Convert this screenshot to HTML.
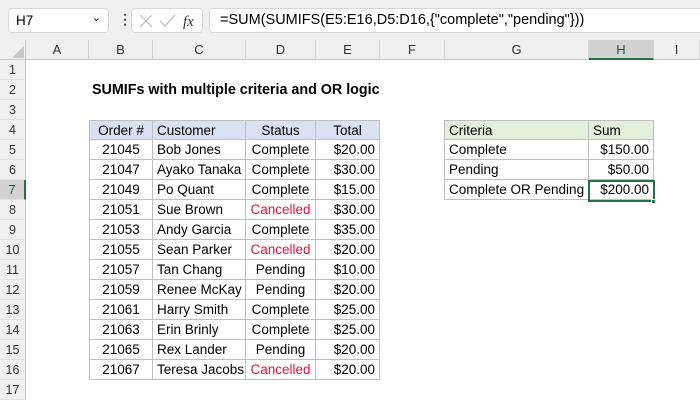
<!DOCTYPE html><html><head><style>
*{margin:0;padding:0;box-sizing:border-box}
body{width:700px;height:400px;overflow:hidden;background:#fff;font-family:"Liberation Sans",Calibri,sans-serif;font-size:13.5px;color:#000;position:relative}
.a{position:absolute}
.top{left:0;top:0;width:700px;height:60px;background:#f0f0f0}
.box{background:#fff;border:1px solid #d6d6d6;border-radius:4px}
.ch{top:40px;height:20px;border-right:1px solid #d4d4d4;border-bottom:1px solid #c8c8c8;text-align:center;line-height:20px;color:#333;font-size:13px}
.rh{left:0;width:26px;height:20px;background:#f0f0f0;border-right:1px solid #c8c8c8;border-bottom:1px solid #e0e0e0;text-align:center;line-height:20px;color:#333;font-size:12.5px}
.c{height:20px;line-height:20px;border-right:1px solid #bfbfbf;border-bottom:1px solid #bfbfbf;padding:0 4px;white-space:nowrap}
.r{text-align:right}.m{text-align:center}.red{color:#e8103a}
</style></head><body>
<div class="a top"></div>
<div class="a box" style="left:8px;top:8px;width:101px;height:25px;padding:4px 7px;font-size:13.5px">H7<span style="position:absolute;right:7px;top:2px;font-size:11px">&#8964;</span></div>
<div class="a" style="left:118px;top:11px;color:#555;font-weight:bold;font-size:14px">&#8942;</div>
<div class="a box" style="left:131px;top:8px;width:72px;height:25px"></div>
<svg class="a" style="left:138px;top:13px" width="60" height="16"><path d="M2 2L14 14M14 2L2 14" stroke="#bbb" stroke-width="1.2" fill="none"/><path d="M22 8l5 5 10-11" stroke="#bbb" stroke-width="1.2" fill="none"/><text x="45" y="13" font-family="Liberation Serif" font-style="italic" font-size="15" fill="#333">fx</text></svg>
<div class="a box" style="left:209px;top:8px;width:500px;height:25px;padding:3px 10px;font-size:14.5px">=SUM(SUMIFS(E5:E16,D5:D16,{"complete","pending"}))</div>
<div class="a" style="left:0;top:40px;width:26px;height:20px;border-right:1px solid #c8c8c8;border-bottom:1px solid #c8c8c8"></div>
<svg class="a" style="left:12px;top:46px" width="12" height="12"><path d="M12 0V12H0Z" fill="#c8c8c8"/></svg>
<div class="a ch" style="left:26px;width:63px">A</div>
<div class="a ch" style="left:89px;width:64px">B</div>
<div class="a ch" style="left:153px;width:93px">C</div>
<div class="a ch" style="left:246px;width:70px">D</div>
<div class="a ch" style="left:316px;width:64px">E</div>
<div class="a ch" style="left:380px;width:65px">F</div>
<div class="a ch" style="left:445px;width:144px">G</div>
<div class="a ch" style="left:589px;width:65px;background:#d2d2d2;border-bottom:2px solid #217346;color:#1e5c38">H</div>
<div class="a ch" style="left:654px;width:46px">I</div>
<div class="a rh" style="top:60px">1</div><div class="a rh" style="top:80px">2</div><div class="a rh" style="top:100px">3</div><div class="a rh" style="top:120px">4</div><div class="a rh" style="top:140px">5</div><div class="a rh" style="top:160px">6</div><div class="a rh" style="top:180px;background:#d2d2d2;border-right:2px solid #217346;color:#1e5c38">7</div><div class="a rh" style="top:200px">8</div><div class="a rh" style="top:220px">9</div><div class="a rh" style="top:240px">10</div><div class="a rh" style="top:260px">11</div><div class="a rh" style="top:280px">12</div><div class="a rh" style="top:300px">13</div><div class="a rh" style="top:320px">14</div><div class="a rh" style="top:340px">15</div><div class="a rh" style="top:360px">16</div><div class="a rh" style="top:380px">17</div>
<div class="a" style="left:92px;top:82px;font-weight:bold;font-size:14.3px">SUMIFs with multiple criteria and OR logic</div>
<div id="T" class="a" style="left:89px;top:120px"></div>
<div id="G" class="a" style="left:444px;top:120px"></div>
<div class="a" style="left:588px;top:180px;width:67px;height:22px;border:2px solid #217346"></div>
<div class="a" style="left:651px;top:199px;width:5px;height:5px;background:#217346;border:1px solid #fff"></div>
<script>
var d=[["21045","Bob Jones","Complete","$20.00"],["21047","Ayako Tanaka","Complete","$30.00"],["21049","Po Quant","Complete","$15.00"],["21051","Sue Brown","Cancelled","$30.00"],["21053","Andy Garcia","Complete","$35.00"],["21055","Sean Parker","Cancelled","$20.00"],["21057","Tan Chang","Pending","$10.00"],["21059","Renee McKay","Pending","$20.00"],["21061","Harry Smith","Complete","$25.00"],["21063","Erin Brinly","Complete","$25.00"],["21065","Rex Lander","Pending","$20.00"],["21067","Teresa Jacobs","Cancelled","$20.00"]];
var w=[64,93,70,64],h='';
function row(v,y,bg,cls){var x=0,s='';for(var i=0;i<4;i++){s+='<div class="a c '+cls[i]+(v[i]=="Cancelled"?" red":"")+'" style="left:'+x+'px;top:'+y+'px;width:'+w[i]+'px;background:'+bg+(i==0?';border-left:1px solid #bfbfbf':'')+(y==0?';border-top:1px solid #bfbfbf':'')+'">'+v[i]+'</div>';x+=w[i];}return s;}
h+=row(["Order #","Customer","Status","Total"],0,"#d9e1f2",["m","","m","m"]);
d.forEach(function(v,i){h+=row(v,20*(i+1),"#fff",["m","","m","r"]);});
document.getElementById('T').innerHTML=h;
var g=[["Criteria","Sum"],["Complete","$150.00"],["Pending","$50.00"],["Complete OR Pending","$200.00"]],s='';
g.forEach(function(v,i){var bg=i==0?"#e2efda":"#fff";s+='<div class="a c" style="left:0;top:'+20*i+'px;width:145px;border-left:1px solid #bfbfbf;background:'+bg+(i==0?';border-top:1px solid #bfbfbf':'')+'">'+v[0]+'</div><div class="a c'+(i?' r':'')+'" style="left:145px;top:'+20*i+'px;width:65px;background:'+bg+(i==0?';border-top:1px solid #bfbfbf':'')+'">'+v[1]+'</div>';});
document.getElementById('G').innerHTML=s;
</script>
</body></html>
